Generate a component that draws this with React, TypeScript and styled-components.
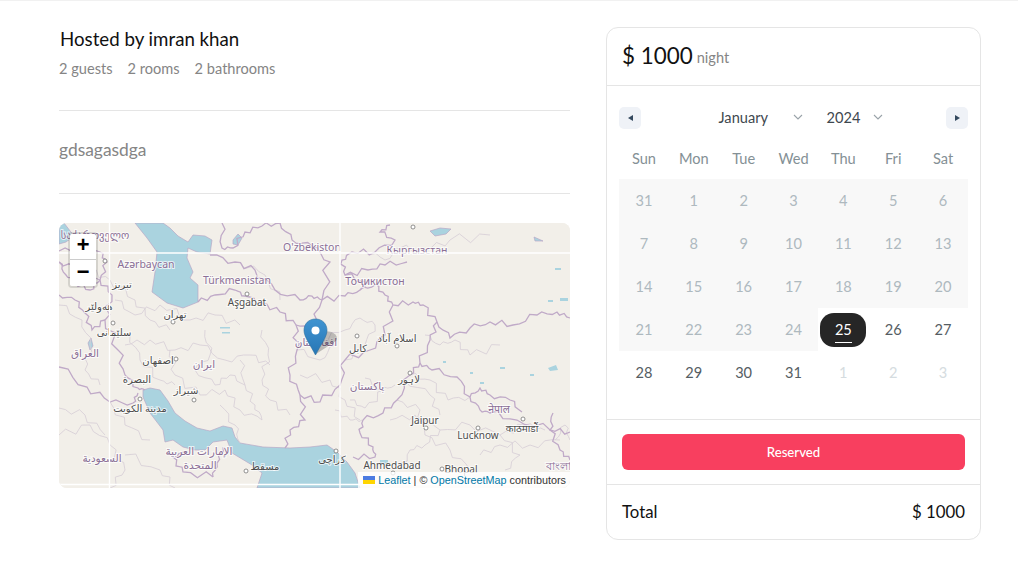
import styled, { createGlobalStyle } from "styled-components"

const GlobalStyle = createGlobalStyle`
  * { box-sizing: border-box; }
  html, body { margin: 0; padding: 0; background: #fff; }
  body { font-family: Lato, "Open Sans", sans-serif; color: #171717; }
`

const Page = styled.div`
  border-top: 1px solid #f1f1f1;
  height: 566px;
  overflow: hidden;
  display: grid;
  grid-template-columns: 511px 375px;
  column-gap: 36px;
  padding: 26px 0 0 59px;
`

const Details = styled.div`
  display: flex;
  flex-direction: column;
`

const HostName = styled.div`
  font-size: 18.7px;
  line-height: 24px;
  font-weight: 400;
  color: #111;
  margin-left: 1px;
`

const Facts = styled.div`
  display: flex;
  gap: 15px;
  margin-top: 8px;
  font-size: 14.6px;
  line-height: 20px;
  color: #858585;
`

const Rule = styled.hr<{ $above?: number }>`
  border: 0;
  border-top: 1px solid #e5e5e5;
  margin: ${(p) => p.$above ?? 0}px 0 0;
  width: 100%;
`

const Description = styled.div`
  margin: 28px 0 32px;
  font-size: 17.4px;
  line-height: 22px;
  color: #858585;
`

const MapFrame = styled.div`
  position: relative;
  margin-top: 29px;
  height: 265px;
  border-radius: 8px;
  overflow: hidden;
  background: #f2efe9;
`

const MapDrawing = styled.svg`
  display: block;
  width: 511px;
  height: 265px;
`

const ZoomControl = styled.div`
  position: absolute;
  left: 9px;
  top: 9px;
  width: 30px;
  border: 2px solid rgba(0, 0, 0, 0.12);
  border-radius: 4px;
  background-clip: padding-box;
`

const ZoomButton = styled.div<{ $last?: boolean }>`
  height: 26px;
  background: #fff;
  display: flex;
  align-items: center;
  justify-content: center;
  font-family: "Liberation Mono", monospace;
  font-size: 22px;
  font-weight: 700;
  color: #000;
  border-bottom: ${(p) => (p.$last ? "0" : "1px solid #ccc")};
  border-radius: ${(p) => (p.$last ? "0 0 2px 2px" : "2px 2px 0 0")};
`

const Attribution = styled.div`
  position: absolute;
  right: 0;
  bottom: 0;
  height: 16px;
  padding: 0 4px 0 5px;
  display: flex;
  align-items: center;
  gap: 3px;
  background: rgba(255, 255, 255, 0.8);
  font-family: "Liberation Sans", Arial, sans-serif;
  font-size: 10.8px;
  line-height: 16px;
  color: #333;
`

const AttributionLink = styled.span`
  color: #0078a8;
`

const Card = styled.div`
  width: 375px;
  height: 513px;
  border: 1px solid #e5e5e5;
  border-radius: 12px;
  overflow: hidden;
  display: flex;
  flex-direction: column;
`

const PriceRow = styled.div`
  height: 58px;
  flex: none;
  display: flex;
  align-items: center;
  gap: 4px;
  padding: 0 15px 3px;
  border-bottom: 1px solid #e5e5e5;
`

const Price = styled.span`
  font-size: 22.4px;
  font-weight: 400;
  color: #111;
`

const PriceUnit = styled.span`
  font-size: 14.6px;
  color: #858585;
  margin-top: 4px;
`

const Calendar = styled.div`
  height: 334px;
  flex: none;
  padding: 21px 12px 0;
  border-bottom: 1px solid #e5e5e5;
`

const MonthBar = styled.div`
  display: flex;
  align-items: center;
  justify-content: space-between;
  height: 22px;
`

const NavButton = styled.div`
  width: 22px;
  height: 22px;
  border-radius: 5px;
  background: #eff2f7;
  display: flex;
  align-items: center;
  justify-content: center;
`

const NavArrow = styled.span<{ $right?: boolean }>`
  width: 0;
  height: 0;
  border-style: solid;
  border-width: 3px 0 3px 5px;
  border-color: transparent transparent transparent #34495e;
  transform: ${(p) => (p.$right ? "none" : "rotate(180deg)")};
`

const Pickers = styled.div`
  display: flex;
  align-items: center;
  gap: 24px;
  margin: -2px 0 0 14px;
`

const Picker = styled.div<{ $width: number }>`
  width: ${(p) => p.$width}px;
  display: flex;
  align-items: center;
  justify-content: space-between;
  font-size: 14.6px;
  color: #3e484f;
`

const Chevron = styled.svg`
  width: 10px;
  height: 6px;
  fill: none;
  stroke: #9aa3a9;
  stroke-width: 1.1;
`

const WeekRow = styled.div`
  display: grid;
  grid-template-columns: repeat(7, 1fr);
  height: 50px;
  align-items: center;
`

const WeekDay = styled.div`
  text-align: center;
  font-size: 14.6px;
  color: #849095;
  padding-top: 9px;
`

const DayGrid = styled.div`
  display: grid;
  grid-template-columns: repeat(7, 1fr);
  grid-auto-rows: 43px;
`

const Day = styled.div<{ $tone: "shut" | "open" | "next" }>`
  position: relative;
  display: flex;
  align-items: center;
  justify-content: center;
  font-size: 14.6px;
  background: ${(p) => (p.$tone === "shut" ? "#f8f8f8" : "transparent")};
  color: ${(p) =>
    p.$tone === "shut" ? "#aeb9bf" : p.$tone === "next" ? "#d5dce0" : "#555d63"};
`

const SelectedDay = styled.div`
  position: relative;
  width: 46px;
  height: 34px;
  border-radius: 14px;
  background: #262626;
  color: #fff;
  display: flex;
  align-items: center;
  justify-content: center;

  &::after {
    content: "";
    position: absolute;
    left: 15px;
    right: 14px;
    bottom: 4px;
    height: 1px;
    background: #fff;
  }
`

const ButtonRow = styled.div`
  height: 65px;
  flex: none;
  padding: 14px 15px 0;
  border-bottom: 1px solid #e5e5e5;
`

const ReserveButton = styled.div`
  height: 36px;
  border-radius: 6px;
  background: #f83f5f;
  color: #fff;
  display: flex;
  align-items: center;
  justify-content: center;
  font-size: 13.2px;
  font-weight: 500;
`

const TotalRow = styled.div`
  flex: 1;
  display: flex;
  align-items: center;
  justify-content: space-between;
  padding: 0 15px 2px;
  font-size: 16.8px;
  font-weight: 400;
  color: #111;
`

const MapLabel = styled.text<{ $kind: "country" | "city" }>`
  font-family: "Noto Sans", "DejaVu Sans", sans-serif;
  font-size: ${(p) => (p.$kind === "country" ? 10.5 : 10)}px;
  fill: ${(p) => (p.$kind === "country" ? "#8b6f96" : "#4d4d4d")};
  stroke: rgba(255, 255, 255, 0.7);
  stroke-width: 2px;
  paint-order: stroke;
  text-anchor: middle;
`

const weekDays = ["Sun", "Mon", "Tue", "Wed", "Thu", "Fri", "Sat"]

const pastDays = [31, ...Array.from({ length: 24 }, (_, i) => i + 1)]

const openDays = [26, 27, 28, 29, 30, 31]

const waters = [
  // caspian
  "M135 223L147 238L157 252L155 272L152 292L167 303L183 308L198 302L198 285L190 278L193 272L187 258L188 248L197 252L210 254L212 240L205 236L193 235L188 242L178 236L170 228L163 223Z",
  // black sea corner
  "M59 225L64 223L74 236L66 242L59 244Z",
  // aral, balkhash and small lakes
  "M233 240L238 234L242 238L238 245L233 244Z",
  "M430 231L440 228L451 229L446 234L435 236Z",
  "M534 237L543 241L535 241Z",
  "M91 338L93 346L90 350L88 343Z",
  // gulf and arabian sea
  "M143 390L150 388L160 390L168 401L175 413L185 421L197 428L210 431L223 426L232 428L235 437L240 443L263 447L290 448L310 447L327 445L337 452L347 462L355 473L360 488L257 488L262 473L252 465L232 453L227 440L213 442L205 450L195 450L183 447L173 440L165 442L163 430L150 413L143 397Z",
]

const spots = [
  "M555 268h6v2h-6z",
  "M548 300h5v2h-5z",
  "M560 298h8v3h-8z",
  "M500 367h5v2h-5z",
  "M530 374h4v2h-4z",
  "M548 368l8-3 2 5-8 1z",
  "M480 382h4v2h-4z",
  "M220 327h10v1.5h-10z",
  "M222 332h8v1.5h-8z",
  "M380 460h8v5h-8z",
  "M443 361h3v2h-3z",
  "M470 372h3v2h-3z",
]

const borders = [
  "M222 223L222 248L233 248L245 232L262 226L280 223",
  "M59 251L84 250L100 252L107 262L100 280L112 295L105 320L118 350L125 375L138 388L145 390",
  "M59 262L78 268L100 280",
  "M59 295L75 300L85 313L92 330L105 320",
  "M59 367L87 387L110 402L133 403L138 393",
  "M198 302L215 295L235 290L245 296L262 303L280 312L296 325L297 350L290 375L300 395L305 420L290 430L285 448",
  "M210 255L235 262L255 270L275 290L300 300L312 296L322 300",
  "M322 300L345 296L360 290L368 283L345 275L342 260L352 252L375 252L395 240L380 232L390 225",
  "M345 275L368 270L385 265L407 262",
  "M360 290L375 285L385 295L393 305L413 302L423 305L437 322L450 338L470 328L490 322L513 325L537 315L557 312L570 318",
  "M296 325L312 330L322 300",
  "M300 395L320 402L340 385L345 360L370 350L385 335L393 305",
  "M437 322L430 340L420 363L410 375L397 400L383 413L363 420L360 433L373 447L375 457L353 457",
  "M420 363L432 370L457 377L470 397L480 410L490 413L517 420L550 430L570 432",
  "M470 397L480 388L490 395L510 400L522 412",
  "M553 413L550 430L560 450L570 460",
  "M213 477L183 472L173 457L185 452",
  "M213 477L217 463L223 447",
  "M59 262L66 275L75 283L90 290L100 280",
  "M280 223L292 240L312 246L330 262L322 300",
]

const stateLines = [
  "M59 305L82 320L90 345L85 370L100 385",
  "M125 345L150 340L175 350L200 345L225 360L250 355L270 365",
  "M170 350L175 375L200 395L225 390L240 410L262 420",
  "M240 360L245 385L255 405L262 420",
  "M59 435L90 425L110 445L125 470L110 488",
  "M150 440L125 425L110 402",
  "M390 420L415 415L440 430L470 425L500 435L520 455L505 470",
  "M440 430L425 445L410 450L400 470",
  "M405 380L430 395L440 415",
  "M365 378L380 390L395 385",
  "M345 330L360 318L375 325L365 345L345 360",
  "M320 340L345 330",
  "M480 455L500 445L530 445L560 440",
  "M335 410L350 420L362 420",
  "M555 440L565 425L570 440",
  "M195 370L215 385L230 375L245 385",
  "M90 270L110 280L135 300L150 320L170 330",
  "M115 300L135 315L160 305L190 320L215 315L240 325",
  "M130 335L140 360L160 380L175 385",
  "M205 330L210 355L195 370",
  "M262 330L268 355L262 380L270 400L290 415",
  "M297 350L320 360L335 345",
  "M300 375L330 380L345 400L360 420",
  "M410 375L430 380L448 400L470 397",
  "M397 400L420 410L425 435L450 450L470 470",
  "M350 400L365 408L385 390",
  "M500 435L525 425L545 430",
  "M425 335L440 345L455 340L470 355L500 345",
  "M240 262L265 275L280 300",
  "M365 250L385 260L400 248L425 250L450 240L490 235",
  "M59 408L85 415L105 435",
  "M220 405L235 425L240 443",
  "M125 455L160 470L175 488",
]

// knock straight segments into something closer to a real border line
const roughen = (d: string) => {
  const points = d
    .replace(/^M/, "")
    .split("L")
    .map((pair) => pair.split(" ").map(Number))
  let out = `M${points[0][0]} ${points[0][1]}`
  points.slice(1).forEach(([x, y], i) => {
    const [px, py] = points[i]
    const nx = -(y - py) / 4
    const ny = (x - px) / 4
    for (let k = 1; k < 4; k++) {
      const t = k / 4
      const w = Math.sin((x + y * 3 + k * 7) * 12.9) * 0.55
      out += `L${(px + (x - px) * t + nx * w).toFixed(1)} ${(py + (y - py) * t + ny * w).toFixed(1)}`
    }
    out += `L${x} ${y}`
  })
  return out
}

const labels: { x: number; y: number; text: string; kind: "country" | "city" }[] = [
  { x: 95, y: 239, text: "საქართველო", kind: "country" },
  { x: 146, y: 268, text: "Azərbaycan", kind: "country" },
  { x: 237, y: 284, text: "Türkmenistan", kind: "country" },
  { x: 312, y: 251, text: "O'zbekiston", kind: "country" },
  { x: 417, y: 254, text: "Кыргызстан", kind: "country" },
  { x: 375, y: 285, text: "Тоҷикистон", kind: "country" },
  { x: 247, y: 306, text: "Aşgabat", kind: "city" },
  { x: 122, y: 288, text: "تبریز", kind: "city" },
  { x: 175, y: 318, text: "تهران", kind: "city" },
  { x: 99, y: 310, text: "هەولێر", kind: "city" },
  { x: 114, y: 336, text: "سلێمانی", kind: "city" },
  { x: 85, y: 357, text: "العراق", kind: "country" },
  { x: 158, y: 364, text: "اصفهان", kind: "city" },
  { x: 204, y: 368, text: "ایران", kind: "country" },
  { x: 137, y: 383, text: "البصرة", kind: "city" },
  { x: 186, y: 394, text: "شیراز", kind: "city" },
  { x: 140, y: 412, text: "مدينة الكويت", kind: "city" },
  { x: 102, y: 462, text: "السعودية", kind: "country" },
  { x: 199, y: 455, text: "الإمارات العربية", kind: "country" },
  { x: 200, y: 469, text: "المتحدة", kind: "country" },
  { x: 265, y: 470, text: "مسقط", kind: "city" },
  { x: 316, y: 346, text: "افغانستان", kind: "country" },
  { x: 358, y: 352, text: "کابل", kind: "city" },
  { x: 397, y: 342, text: "اسلام آباد", kind: "city" },
  { x: 367, y: 390, text: "پاکستان", kind: "country" },
  { x: 409, y: 383, text: "لاہور", kind: "city" },
  { x: 425, y: 424, text: "Jaipur", kind: "city" },
  { x: 478, y: 439, text: "Lucknow", kind: "city" },
  { x: 522, y: 432, text: "काठमाडौं", kind: "city" },
  { x: 499, y: 413, text: "नेपाल", kind: "country" },
  { x: 332, y: 463, text: "کراچی", kind: "city" },
  { x: 392, y: 469, text: "Ahmedabad", kind: "city" },
  { x: 461, y: 473, text: "Bhopal", kind: "city" },
  { x: 558, y: 470, text: "বাংলা", kind: "country" },
]

const cityDots = [
  [247, 294], [413, 227], [173, 322], [113, 323], [105, 261], [357, 336], [397, 346],
  [410, 373], [426, 428], [478, 428], [523, 419], [194, 400], [140, 399], [246, 471],
  [176, 359], [336, 451], [393, 473], [442, 469],
]

const MapArt = () => (
  <MapDrawing viewBox="59 223 511 265">
    <defs>
      <linearGradient id="pin" x1="0" y1="0" x2="0" y2="1">
        <stop offset="0" stopColor="#3f94d1" />
        <stop offset="1" stopColor="#2776b5" />
      </linearGradient>
      <filter id="soft">
        <feGaussianBlur stdDeviation="0.35" />
      </filter>
    </defs>
    <rect x="59" y="223" width="511" height="265" fill="#f2efe9" />
    <g filter="url(#soft)">
      {waters.map((d) => (
        <path key={d} d={d} fill="#aad3df" stroke="#b9a7c6" strokeWidth="0.7" />
      ))}
      {spots.map((d) => (
        <path key={d} d={d} fill="#aad3df" />
      ))}
      {stateLines.map((d) => (
        <path key={d} d={roughen(d)} fill="none" stroke="#d6cdd6" strokeWidth="0.8" />
      ))}
      {borders.map((d) => (
        <path key={d} d={roughen(d)} fill="none" stroke="#c0aac8" strokeWidth="1.3" />
      ))}
      {cityDots.map(([x, y]) => (
        <circle key={`${x}-${y}`} cx={x} cy={y} r="2" fill="#fff" stroke="#777" strokeWidth="0.8" />
      ))}
    </g>
    {labels.map((l) => (
      <MapLabel key={l.text} x={l.x} y={l.y} $kind={l.kind}>
        {l.text}
      </MapLabel>
    ))}
    {/* tile seams */}
    <path d="M109.5 223V488M340 223V488M59 253H570M59 484.5H570" stroke="#fff" strokeWidth="1.4" fill="none" />
    {/* marker shadow and pin */}
    <path d="M316 354L336 341C340 335 330 329 322 332Z" fill="#000" opacity="0.22" filter="url(#soft)" />
    <path
      d="M315.5 319C308.5 319 304 324 304 330.5C304 337 311 346 315.5 355C320 346 327 337 327 330.5C327 324 322.5 319 315.5 319Z"
      fill="url(#pin)"
      stroke="#2a6f9f"
      strokeWidth="0.6"
    />
    <circle cx="315.5" cy="330.5" r="4" fill="#fff" />
  </MapDrawing>
)

const App = () => (
  <>
    <GlobalStyle />
    <Page>
      <Details>
        <HostName>Hosted by imran khan</HostName>
        <Facts>
          <span>2 guests</span>
          <span>2 rooms</span>
          <span>2 bathrooms</span>
        </Facts>
        <Rule $above={31} />
        <Description>gdsagasdga</Description>
        <Rule />
        <MapFrame>
          <MapArt />
          <ZoomControl>
            <ZoomButton>+</ZoomButton>
            <ZoomButton $last>−</ZoomButton>
          </ZoomControl>
          <Attribution>
            <svg width="12" height="8" viewBox="0 0 12 8">
              <rect width="12" height="4" fill="#4c7be1" />
              <rect y="4" width="12" height="4" fill="#ffd500" />
            </svg>
            <AttributionLink>Leaflet</AttributionLink>
            <span>|</span>
            <span>©</span>
            <AttributionLink>OpenStreetMap</AttributionLink>
            <span>contributors</span>
          </Attribution>
        </MapFrame>
      </Details>
      <Card>
        <PriceRow>
          <Price>$ 1000</Price>
          <PriceUnit>night</PriceUnit>
        </PriceRow>
        <Calendar>
          <MonthBar>
            <NavButton>
              <NavArrow />
            </NavButton>
            <Pickers>
              <Picker $width={84}>
                January
                <Chevron viewBox="0 0 10 6">
                  <path d="M1 1l4 4 4-4" />
                </Chevron>
              </Picker>
              <Picker $width={56}>
                2024
                <Chevron viewBox="0 0 10 6">
                  <path d="M1 1l4 4 4-4" />
                </Chevron>
              </Picker>
            </Pickers>
            <NavButton>
              <NavArrow $right />
            </NavButton>
          </MonthBar>
          <WeekRow>
            {weekDays.map((d) => (
              <WeekDay key={d}>{d}</WeekDay>
            ))}
          </WeekRow>
          <DayGrid>
            {pastDays.map((d, i) => (
              <Day key={i} $tone="shut">
                {d}
              </Day>
            ))}
            <Day $tone="open">
              <SelectedDay>25</SelectedDay>
            </Day>
            {openDays.map((d) => (
              <Day key={d} $tone="open">
                {d}
              </Day>
            ))}
            {[1, 2, 3].map((d) => (
              <Day key={d} $tone="next">
                {d}
              </Day>
            ))}
          </DayGrid>
        </Calendar>
        <ButtonRow>
          <ReserveButton>Reserved</ReserveButton>
        </ButtonRow>
        <TotalRow>
          <span>Total</span>
          <span>$ 1000</span>
        </TotalRow>
      </Card>
    </Page>
  </>
)

export default App
